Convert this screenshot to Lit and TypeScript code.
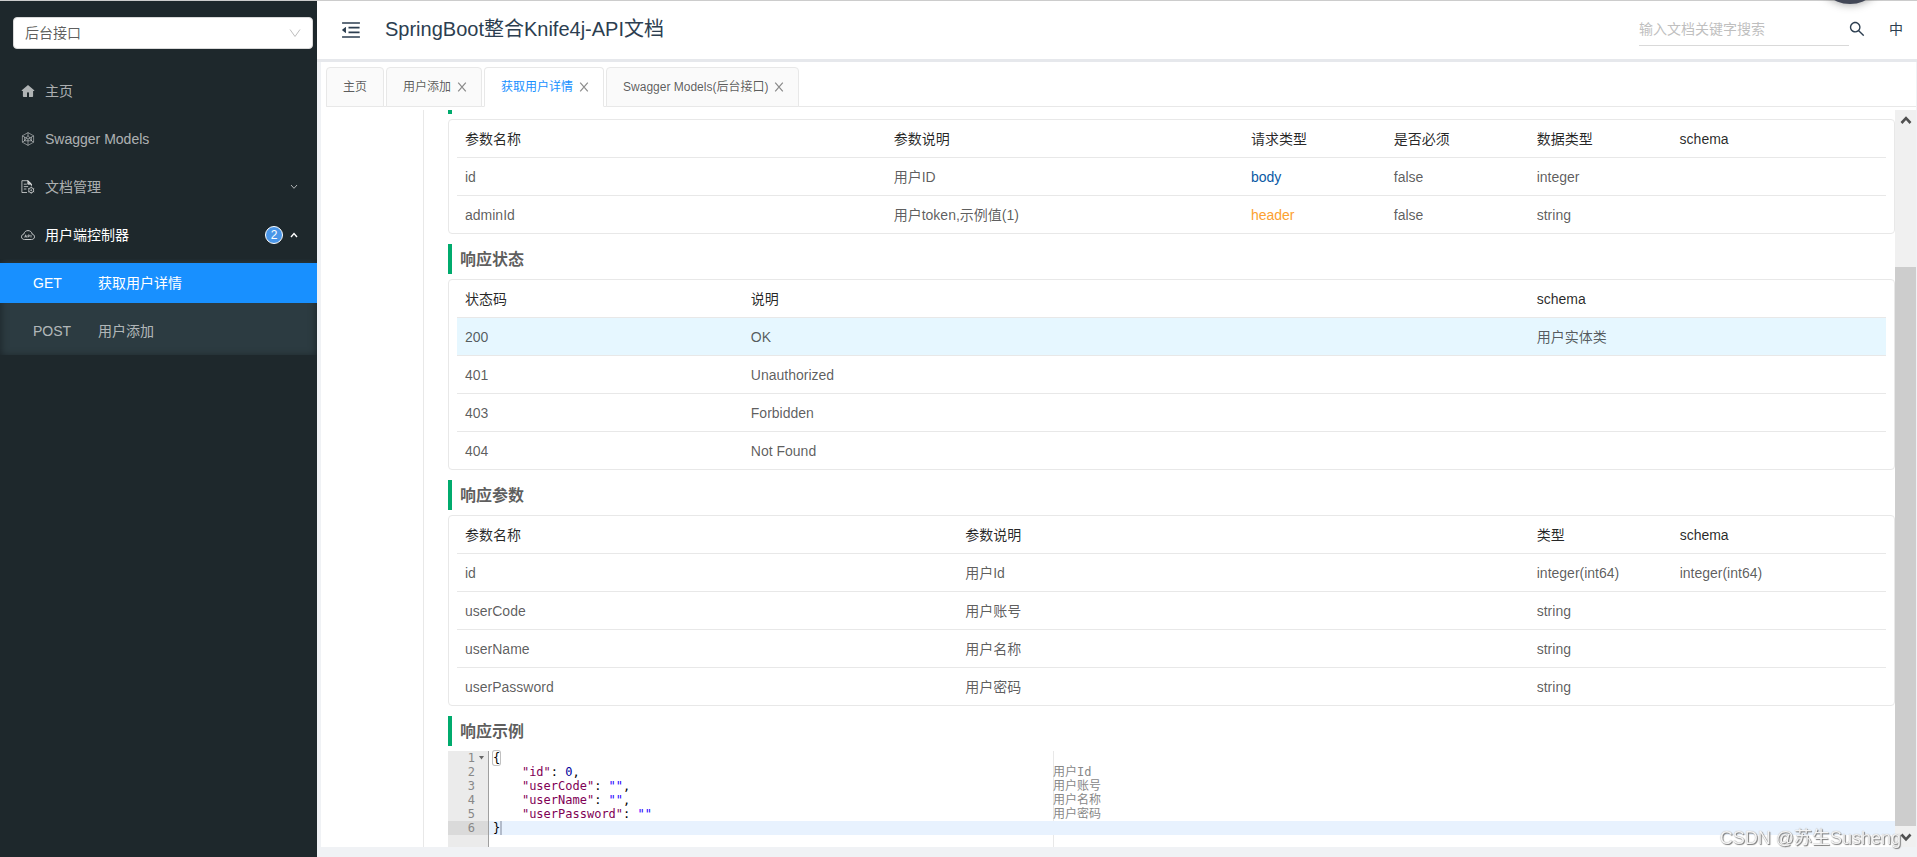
import { LitElement, html, css, svg, nothing } from "lit";
import { customElement, property, state } from "lit/decorators.js";
import { classMap } from "lit/directives/class-map.js";
import { styleMap } from "lit/directives/style-map.js";

interface Column {
  title: string;
  width: number;
}

interface TabItem {
  key: string;
  label: string;
  closable: boolean;
}

interface CodeLine {
  parts: Array<[string, string]>;
  note?: string;
}

const icons = {
  fold: svg`<svg viewBox="64 64 896 896" width="20" height="20" fill="currentColor"><path d="M408 442h480c4.4 0 8-3.6 8-8v-56c0-4.4-3.6-8-8-8H408c-4.4 0-8 3.6-8 8v56c0 4.4 3.6 8 8 8zm-8 204c0 4.4 3.6 8 8 8h480c4.4 0 8-3.6 8-8v-56c0-4.4-3.6-8-8-8H408c-4.4 0-8 3.6-8 8v56zm504-486H120c-4.4 0-8 3.6-8 8v56c0 4.4 3.6 8 8 8h784c4.4 0 8-3.6 8-8v-56c0-4.4-3.6-8-8-8zm0 632H120c-4.4 0-8 3.6-8 8v56c0 4.4 3.6 8 8 8h784c4.4 0 8-3.6 8-8v-56c0-4.4-3.6-8-8-8zM115.4 518.9L271.7 642c5.8 4.6 14.4.5 14.4-6.9V388.9c0-7.4-8.5-11.5-14.4-6.9L115.4 505.1a8.74 8.74 0 0 0 0 13.8z"/></svg>`,
  search: svg`<svg viewBox="64 64 896 896" width="16" height="16" fill="currentColor"><path d="M909.6 854.5L649.9 594.8C690.2 542.7 712 479 712 412c0-80.2-31.3-155.4-87.9-212.1-56.6-56.7-132-87.9-212.1-87.9s-155.5 31.3-212.1 87.9C143.2 256.5 112 331.8 112 412c0 80.1 31.3 155.5 87.9 212.1C256.5 680.8 331.8 712 412 712c67 0 130.6-21.8 182.7-62l259.7 259.6a8.2 8.2 0 0 0 11.6 0l43.6-43.5a8.2 8.2 0 0 0 0-11.6zM570.4 570.4C528 612.7 471.8 636 412 636s-116-23.3-158.4-65.6C211.3 528 188 471.8 188 412s23.3-116.1 65.6-158.4C296 211.3 352.2 188 412 188s116.1 23.2 158.4 65.6S636 352.2 636 412s-23.3 116.1-65.6 158.4z"/></svg>`,
  close: svg`<svg viewBox="0 0 10 10" width="10" height="10" fill="none" stroke="currentColor" stroke-width="1.2"><path d="M1.2 .6L8.8 9.4M8.800 .6L1.2 9.4"/></svg>`,
  home: svg`<svg viewBox="0 0 14 14" width="14" height="14" fill="currentColor"><path fill-rule="evenodd" d="M7 1L.8 6.2c-.3.3-.1.7.3.7h.8v5.3c0 .5.3.8.8.8h8.6c.5 0 .8-.3.8-.8V6.900h.8c.4 0 .6-.4.3-.7zM6 13V9.300c0-1.300 2-1.300 2 0V13z"/></svg>`,
  model: svg`<svg viewBox="0 0 14 14" width="14" height="14" fill="none" stroke="currentColor" stroke-width=".7"><path d="M7 .6l5.600 3.200v6.400L7 13.400 1.400 10.200V3.800zM1.400 3.800L7 7l5.600-3.200M7 7v6.400M7 .6v2.800L3.600 8.800 1.400 10.200M7 3.400l3.400 5.400 2.200 1.400M3.600 8.800h6.800M3.600 5v3.800M10.400 5v3.800"/></svg>`,
  doc: svg`<svg viewBox="0 0 14 14" width="14" height="14" fill="none" stroke="currentColor"><path d="M6 12.500H.9V.7H7l3.400 3.300v2.200M2.800 4.200h3M2.800 6.600h4.400M2.800 9h2.600"/><path d="M6.800.7v3.500h3.700z" fill="currentColor"/><circle cx="10.200" cy="10.200" r="2.500"/><circle cx="10.200" cy="10.200" r=".5"/><path d="M10.200 6.700v1M10.200 12.700v1M7.200 8.500l.8.5M12.400 11.500l.8.5M7.200 12l.8-.5M12.400 9l.8-.5"/></svg>`,
  cloud: svg`<svg viewBox="0 0 14 14" width="14" height="14" fill="none" stroke="currentColor"><path d="M3.500 11.500h7c1.700 0 3-1.100 3-2.700 0-1.400-1-2.400-2.300-2.700C10.800 3.900 9.100 2.600 7 2.600S3.300 3.900 2.800 6.100C1.500 6.400.5 7.400.5 8.800c0 1.600 1.300 2.700 3 2.700z"/><path d="M3.700 9.500l1-2.700 1 2.700M4 8.700h1.400M7 9.500V7h1c1 0 1 1.400 0 1.400H7M10 6.800v2.700" stroke-width=".8"/></svg>`,
  chevron: svg`<svg viewBox="0 0 8 8" width="8" height="8" fill="none" stroke="currentColor"><path d="M1 2l3 3.300L7 2"/></svg>`,
  chevronUp: svg`<svg viewBox="0 0 8 8" width="8" height="8" fill="none" stroke="currentColor" stroke-width="1.400"><path d="M1 6l3-3.500L7 6"/></svg>`,
  selectArrow: svg`<svg viewBox="0 0 12 12" width="12" height="12" fill="none" stroke="currentColor"><path d="M1 2.500l5 7 5-7"/></svg>`,
  scrollUp: svg`<svg viewBox="0 0 12 12" width="12" height="12" fill="none" stroke="currentColor" stroke-width="2.600"><path d="M1.500 8L6 3.200l4.500 4.800"/></svg>`,
  scrollDown: svg`<svg viewBox="0 0 12 12" width="12" height="12" fill="none" stroke="currentColor" stroke-width="2.600"><path d="M1.500 3.500L6 8.300l4.500-4.800"/></svg>`,
};

@customElement("api-table")
class ApiTable extends LitElement {
  @property({ attribute: false }) columns: Column[] = [];
  @property({ attribute: false }) rows: string[][] = [];
  @property({ type: Number }) highlight = -1;
  @property() label = "";

  static styles = css`
    :host {
      display: block;
      border: 1px solid #e8e8e8;
      border-radius: 4px;
      padding: 0 8px;
    }
    table {
      width: 100%;
      table-layout: fixed;
      border-collapse: separate;
      border-spacing: 0;
      color: rgba(0, 0, 0, 0.65);
      font-size: 14px;
      line-height: 21px;
    }
    th,
    td {
      height: 21px;
      padding: 9px 8px 7px;
      text-align: left;
      font-weight: 400;
      border-bottom: 1px solid #e8e8e8;
    }
    th {
      color: rgba(0, 0, 0, 0.85);
    }
    tr:last-child td {
      border-bottom: 0;
    }
    .highlight td {
      background: #e6f7ff;
    }
    .body {
      color: #0a59a4;
    }
    .header {
      color: #fca130;
    }
  `;

  render() {
    return html`
      <table aria-label=${this.label}>
        <colgroup>
          ${this.columns.map((c) => html`<col style=${styleMap({ width: `${c.width}%` })} />`)}
        </colgroup>
        <thead>
          <tr>
            ${this.columns.map((c) => html`<th scope="col">${c.title}</th>`)}
          </tr>
        </thead>
        <tbody>
          ${this.rows.map(
            (row, i) => html`
              <tr class=${classMap({ highlight: i === this.highlight })}>
                ${row.map((cell) => html`<td><span class=${classMap({ body: cell === "body", header: cell === "header" })}>${cell}</span></td>`)}
              </tr>
            `
          )}
        </tbody>
      </table>
    `;
  }
}

@customElement("json-viewer")
class JsonViewer extends LitElement {
  @property({ attribute: false }) lines: CodeLine[] = [];
  @property({ type: Number }) active = -1;

  static styles = css`
    :host {
      display: flex;
      flex-direction: column;
      font-family: "DejaVu Sans Mono", "Noto Sans CJK SC", monospace;
      font-size: 12px;
      line-height: 14px;
      color: #000;
    }
    .line {
      display: grid;
      grid-template-columns: 40px 565px 1fr;
      height: 14px;
      flex: none;
      white-space: pre;
    }
    .rest {
      flex: 1;
      height: auto;
    }
    .gutter {
      display: flex;
      justify-content: flex-end;
      align-items: center;
      background: #ebebeb;
      color: #888;
    }
    .fold {
      width: 13px;
      display: flex;
      justify-content: center;
      color: #666;
    }
    .code {
      border-left: 1px solid #9f9f9f;
      padding-left: 4px;
    }
    .note {
      box-shadow: inset 1px 0 #e8e8e8;
      color: #888;
    }
    .active .gutter {
      background: #dadada;
    }
    .active .code,
    .active .note {
      background: #e8f2fe;
      box-shadow: none;
    }
    .key {
      color: #7f0055;
    }
    .str {
      color: #2a00ff;
    }
    .num {
      color: #00009c;
    }
    .match {
      box-shadow: 0 0 0 1px #c0c0c0;
      border-radius: 2px;
    }
    .cursor {
      border-right: 2px solid #b3bccb;
    }
  `;

  render() {
    return html`
      ${this.lines.map(
        (line, i) => html`
          <div class=${classMap({ line: true, active: i === this.active })}>
            <span class="gutter"
              >${i + 1}<span class="fold"
                >${i === 0 ? svg`<svg viewBox="0 0 5 4" width="5" height="4" fill="currentColor"><path d="M0 0h5L2.500 3.500z"/></svg>` : nothing}</span
              ></span
            ><span class="code">${line.parts.map(([kind, text]) => html`<span class=${kind}>${text}</span>`)}</span
            ><span class="note">${line.note ?? ""}</span>
          </div>
        `
      )}
      <div class="line rest"><span class="gutter"></span><span class="code"></span><span class="note"></span></div>
    `;
  }
}

@customElement("app-root")
class AppRoot extends LitElement {
  @state() private tabs: TabItem[] = [
    { key: "home", label: "主页", closable: false },
    { key: "add", label: "用户添加", closable: true },
    { key: "detail", label: "获取用户详情", closable: true },
    { key: "models", label: "Swagger Models(后台接口)", closable: true },
  ];
  @state() private activeTab = "detail";

  private requestColumns: Column[] = [
    { title: "参数名称", width: 30 },
    { title: "参数说明", width: 25 },
    { title: "请求类型", width: 10 },
    { title: "是否必须", width: 10 },
    { title: "数据类型", width: 10 },
    { title: "schema", width: 15 },
  ];
  private requestRows = [
    ["id", "用户ID", "body", "false", "integer", ""],
    ["adminId", "用户token,示例值(1)", "header", "false", "string", ""],
  ];
  private statusColumns: Column[] = [
    { title: "状态码", width: 20 },
    { title: "说明", width: 55 },
    { title: "schema", width: 25 },
  ];
  private statusRows = [
    ["200", "OK", "用户实体类"],
    ["401", "Unauthorized", ""],
    ["403", "Forbidden", ""],
    ["404", "Not Found", ""],
  ];
  private responseColumns: Column[] = [
    { title: "参数名称", width: 35 },
    { title: "参数说明", width: 40 },
    { title: "类型", width: 10 },
    { title: "schema", width: 15 },
  ];
  private responseRows = [
    ["id", "用户Id", "integer(int64)", "integer(int64)"],
    ["userCode", "用户账号", "string", ""],
    ["userName", "用户名称", "string", ""],
    ["userPassword", "用户密码", "string", ""],
  ];
  private sample: CodeLine[] = [
    { parts: [["match", "{"]] },
    { parts: [["", "    "], ["key", '"id"'], ["", ": "], ["num", "0"], ["", ","]], note: "用户Id" },
    { parts: [["", "    "], ["key", '"userCode"'], ["", ": "], ["str", '""'], ["", ","]], note: "用户账号" },
    { parts: [["", "    "], ["key", '"userName"'], ["", ": "], ["str", '""'], ["", ","]], note: "用户名称" },
    { parts: [["", "    "], ["key", '"userPassword"'], ["", ": "], ["str", '""']], note: "用户密码" },
    { parts: [["cursor", "}"]] },
  ];

  static styles = css`
    :host {
      display: flex;
      height: 100vh;
      box-sizing: border-box;
      border-top: 1px solid #ccc;
      overflow: hidden;
      font-family: "Liberation Sans", "Noto Sans CJK SC", sans-serif;
      font-size: 14px;
      line-height: 21px;
      color: rgba(0, 0, 0, 0.65);
      background: #f0f2f5;
    }
    * {
      box-sizing: border-box;
    }
    svg {
      display: block;
      flex: none;
    }
    button {
      font: inherit;
      color: inherit;
      background: none;
      border: 0;
      padding: 0;
      cursor: pointer;
    }
    a {
      color: inherit;
      text-decoration: none;
    }
    .sidebar {
      flex: none;
      width: 317px;
      background: #1e282c;
      color: rgba(255, 255, 255, 0.65);
    }
    .group {
      position: relative;
      margin: 16px 4px 0 13px;
    }
    .group select {
      display: block;
      width: 100%;
      height: 32px;
      padding: 0 11px;
      appearance: none;
      border: 1px solid #d9d9d9;
      border-radius: 4px;
      background: #fff;
      font: inherit;
      color: rgba(0, 0, 0, 0.65);
    }
    .group svg {
      position: absolute;
      right: 12px;
      top: 10px;
      color: #bfbfbf;
      pointer-events: none;
    }
    .menu {
      display: flex;
      flex-direction: column;
      padding-top: 22px;
    }
    .item {
      display: flex;
      align-items: center;
      gap: 10px;
      height: 40px;
      margin: 0 0 8px;
      padding: 0 19px 0 21px;
      text-align: left;
    }
    .item .name {
      flex: 1;
    }
    .item.open {
      color: #fff;
      margin-bottom: 4px;
    }
    .item.open .glyph {
      opacity: 0.75;
    }
    .count {
      width: 18px;
      height: 18px;
      margin-right: -3px;
      border: 1px solid #fff;
      border-radius: 50%;
      background: #4a96e8;
      font-size: 12px;
      line-height: 16px;
      text-align: center;
    }
    .submenu {
      display: flex;
      flex-direction: column;
      gap: 8px;
      padding: 4px 0;
      background: #2c3b41;
      box-shadow: 0 2px 8px rgba(0, 0, 0, 0.45) inset;
    }
    .api {
      display: grid;
      grid-template-columns: 65px 1fr;
      align-items: center;
      height: 40px;
      padding-left: 33px;
    }
    .api.current {
      background: #1890ff;
      color: #fff;
    }
    .main {
      flex: 1;
      min-width: 0;
      display: flex;
      flex-direction: column;
    }
    .topbar {
      display: flex;
      align-items: center;
      flex: none;
      height: 61px;
      padding: 0 14px 0 24px;
      background: #fff;
      border-bottom: 3px solid #e6e8ec;
      color: #2c3e50;
    }
    .title {
      flex: 1;
      margin: 0 0 2px 24px;
      font-size: 20px;
      line-height: 30px;
      font-weight: 400;
    }
    .search {
      width: 210px;
      height: 32px;
      border: 0;
      border-bottom: 1px solid #d9d9d9;
      padding: 0 0 2px;
      font: inherit;
      color: inherit;
      outline: none;
      background: none;
    }
    .search::placeholder {
      color: #bfbfbf;
      opacity: 1;
    }
    .tool {
      margin-bottom: 2px;
    }
    .lang {
      margin-left: 24px;
    }
    .panel {
      flex: 1;
      min-height: 0;
      display: flex;
      flex-direction: column;
      margin: 0 1px 10px 4px;
      padding-top: 5px;
      background: #fff;
    }
    .tabs {
      display: flex;
      flex: none;
      gap: 2px;
      padding-left: 5px;
      height: 40px;
      margin-bottom: 3px;
      background: linear-gradient(#e8e8e8, #e8e8e8) 5px 100% / 100% 1px no-repeat;
    }
    .tab {
      display: flex;
      align-items: center;
      gap: 6px;
      padding: 0 14px 0 16px;
      border: 1px solid #e8e8e8;
      border-radius: 4px 4px 0 0;
      background: #fafafa;
      font-size: 12px;
      line-height: 18px;
      white-space: nowrap;
    }
    .tab.fixed {
      padding-right: 16px;
    }
    .tab.selected {
      background: #fff;
      border-bottom-color: #fff;
      color: #1890ff;
    }
    .close {
      color: rgba(0, 0, 0, 0.45);
    }
    .view {
      flex: 1;
      min-height: 0;
      display: flex;
    }
    .side-tabs {
      flex: none;
      width: 103px;
      border-right: 1px solid #e8e8e8;
    }
    .doc {
      flex: 1;
      min-width: 0;
      overflow: hidden;
      display: flex;
      flex-direction: column;
      padding-left: 24px;
    }
    .bar-end {
      flex: none;
      width: 4px;
      height: 4px;
      margin-bottom: 5px;
      background: #00ab6d;
    }
    .section {
      flex: none;
      height: 30px;
      margin: 10px 0 5px;
      padding-left: 8px;
      border-left: 4px solid #00ab6d;
      font-size: 16px;
      line-height: 32px;
      font-weight: 700;
    }
    api-table {
      flex: none;
    }
    json-viewer {
      flex: 1;
    }
    .scrollbar {
      flex: none;
      width: 21px;
      display: flex;
      flex-direction: column;
      background: #f0f0f0;
      color: #505050;
    }
    .step {
      height: 21px;
      display: flex;
      align-items: center;
      justify-content: center;
      flex: none;
    }
    .track {
      flex: 1;
      display: flex;
      flex-direction: column;
      justify-content: flex-end;
    }
    .thumb {
      background: #cdcdcd;
    }
    .knob {
      position: fixed;
      top: -64px;
      right: 33px;
      width: 68px;
      height: 68px;
      border-radius: 50%;
      background: #434857;
      box-shadow: 0 0 10px rgba(0, 0, 0, 0.4);
    }
    .watermark {
      position: fixed;
      right: 16px;
      bottom: 5px;
      font-size: 18px;
      line-height: 27px;
      color: #f4f4f4;
      text-shadow: 1px 1px 1px #777, 0 0 1px #999;
    }
  `;

  private closeTab(key: string) {
    this.tabs = this.tabs.filter((t) => t.key !== key);
    if (this.activeTab === key) this.activeTab = "home";
  }

  private renderTab(tab: TabItem) {
    return html`
      <div class=${classMap({ tab: true, fixed: !tab.closable, selected: tab.key === this.activeTab })}>
        <button type="button" @click=${() => (this.activeTab = tab.key)}>${tab.label}</button>
        ${tab.closable
          ? html`<button type="button" class="close" aria-label="关闭" @click=${() => this.closeTab(tab.key)}>${icons.close}</button>`
          : nothing}
      </div>
    `;
  }

  render() {
    return html`
      <aside class="sidebar">
        <div class="group">
          <select aria-label="接口分组">
            <option>后台接口</option>
          </select>
          ${icons.selectArrow}
        </div>
        <nav class="menu">
          <a class="item" href="#home">${icons.home}<span class="name">主页</span></a>
          <a class="item" href="#models">${icons.model}<span class="name">Swagger Models</span></a>
          <button type="button" class="item">${icons.doc}<span class="name">文档管理</span>${icons.chevron}</button>
          <button type="button" class="item open">
            <span class="glyph">${icons.cloud}</span><span class="name">用户端控制器</span><span class="count">2</span>${icons.chevronUp}
          </button>
          <div class="submenu">
            <a class="api current" href="#detail"><span>GET</span><span>获取用户详情</span></a>
            <a class="api" href="#add"><span>POST</span><span>用户添加</span></a>
          </div>
        </nav>
      </aside>
      <div class="main">
        <header class="topbar">
          <button type="button" aria-label="折叠菜单">${icons.fold}</button>
          <h1 class="title">SpringBoot整合Knife4j-API文档</h1>
          <input class="search" type="text" aria-label="搜索" placeholder="输入文档关键字搜索" />
          <button type="button" class="tool" aria-label="搜索">${icons.search}</button>
          <button type="button" class="tool lang">中</button>
        </header>
        <main class="panel">
          <div class="tabs">${this.tabs.map((t) => this.renderTab(t))}</div>
          <div class="view">
            <div class="side-tabs"></div>
            <div class="doc">
              <div class="bar-end"></div>
              <api-table label="请求参数" .columns=${this.requestColumns} .rows=${this.requestRows}></api-table>
              <div class="section">响应状态</div>
              <api-table label="响应状态" .columns=${this.statusColumns} .rows=${this.statusRows} .highlight=${0}></api-table>
              <div class="section">响应参数</div>
              <api-table label="响应参数" .columns=${this.responseColumns} .rows=${this.responseRows}></api-table>
              <div class="section">响应示例</div>
              <json-viewer .lines=${this.sample} .active=${5}></json-viewer>
            </div>
            <div class="scrollbar">
              <div class="step">${icons.scrollUp}</div>
              <div class="track"><div class="thumb" style=${styleMap({ height: `${(559 / 695) * 100}%` })}></div></div>
              <div class="step">${icons.scrollDown}</div>
            </div>
          </div>
        </main>
      </div>
      <div class="knob"></div>
      <div class="watermark">CSDN @苏生Susheng</div>
    `;
  }
}
